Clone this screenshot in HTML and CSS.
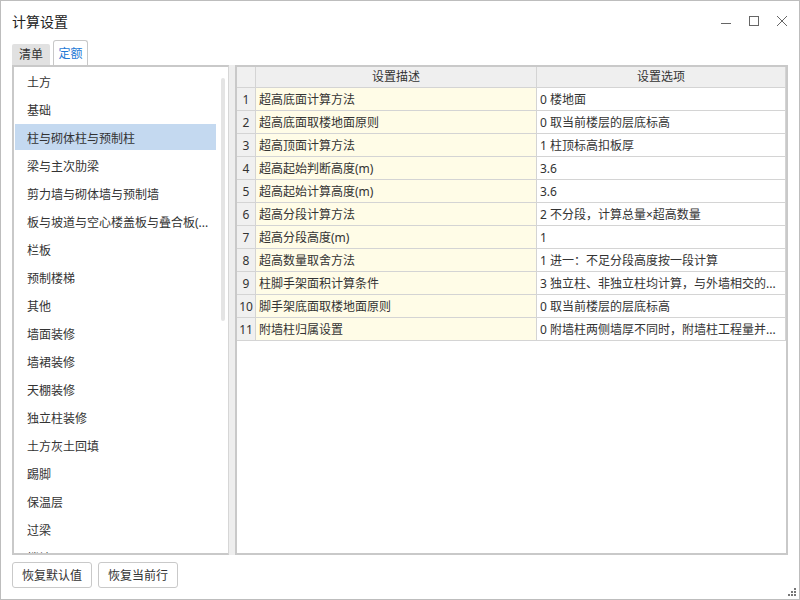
FILE: index.html
```html
<!DOCTYPE html>
<html lang="zh-CN">
<head>
<meta charset="utf-8">
<title>计算设置</title>
<link rel="stylesheet" href="styles.css">
</head>
<body>
<div class="window">
  <div class="titlebar">
    <span class="title">计算设置</span>
    <div class="controls">
      <svg class="ctl" width="10" height="10" viewBox="0 0 10 10"><line x1="0" y1="7.5" x2="10" y2="7.5" stroke="#666" stroke-width="1"/></svg>
      <svg class="ctl" width="10" height="10" viewBox="0 0 10 10"><rect x="0.5" y="0.5" width="9" height="9" fill="none" stroke="#666" stroke-width="1"/></svg>
      <svg class="ctl" width="10" height="10" viewBox="0 0 10 10"><path d="M0 0 L10 10 M10 0 L0 10" stroke="#666" stroke-width="1"/></svg>
    </div>
  </div>
  <div class="tabs">
    <div class="tab">清单</div>
    <div class="tab active">定额</div>
  </div>
  <div class="main">
    <div class="left">
      <div class="items">
        <div class="item">土方</div>
        <div class="item">基础</div>
        <div class="item selected">柱与砌体柱与预制柱</div>
        <div class="item">梁与主次肋梁</div>
        <div class="item">剪力墙与砌体墙与预制墙</div>
        <div class="item">板与坡道与空心楼盖板与叠合板(...</div>
        <div class="item">栏板</div>
        <div class="item">预制楼梯</div>
        <div class="item">其他</div>
        <div class="item">墙面装修</div>
        <div class="item">墙裙装修</div>
        <div class="item">天棚装修</div>
        <div class="item">独立柱装修</div>
        <div class="item">土方灰土回填</div>
        <div class="item">踢脚</div>
        <div class="item">保温层</div>
        <div class="item">过梁</div>
        <div class="item">楼地面</div>
      </div>
      <div class="track"><div class="thumb"></div></div>
    </div>
    <div class="splitter"></div>
    <div class="right">
      <div class="row head">
        <div class="cell num"></div>
        <div class="cell c">设置描述</div>
        <div class="cell c">设置选项</div>
      </div>
      <div class="row"><div class="cell num">1</div><div class="cell desc">超高底面计算方法</div><div class="cell opt">0 楼地面</div></div>
      <div class="row"><div class="cell num">2</div><div class="cell desc">超高底面取楼地面原则</div><div class="cell opt">0 取当前楼层的层底标高</div></div>
      <div class="row"><div class="cell num">3</div><div class="cell desc">超高顶面计算方法</div><div class="cell opt">1 柱顶标高扣板厚</div></div>
      <div class="row"><div class="cell num">4</div><div class="cell desc">超高起始判断高度(m)</div><div class="cell opt">3.6</div></div>
      <div class="row"><div class="cell num">5</div><div class="cell desc">超高起始计算高度(m)</div><div class="cell opt">3.6</div></div>
      <div class="row"><div class="cell num">6</div><div class="cell desc">超高分段计算方法</div><div class="cell opt">2 不分段，计算总量×超高数量</div></div>
      <div class="row"><div class="cell num">7</div><div class="cell desc">超高分段高度(m)</div><div class="cell opt">1</div></div>
      <div class="row"><div class="cell num">8</div><div class="cell desc">超高数量取舍方法</div><div class="cell opt">1 进一：不足分段高度按一段计算</div></div>
      <div class="row"><div class="cell num">9</div><div class="cell desc">柱脚手架面积计算条件</div><div class="cell opt">3 独立柱、非独立柱均计算，与外墙相交的...</div></div>
      <div class="row"><div class="cell num">10</div><div class="cell desc">脚手架底面取楼地面原则</div><div class="cell opt">0 取当前楼层的层底标高</div></div>
      <div class="row"><div class="cell num">11</div><div class="cell desc">附墙柱归属设置</div><div class="cell opt">0 附墙柱两侧墙厚不同时，附墙柱工程量并...</div></div>
    </div>
  </div>
  <div class="footer">
    <button class="btn">恢复默认值</button>
    <button class="btn">恢复当前行</button>
  </div>
  <svg class="grip" width="10" height="10" viewBox="0 0 10 10">
    <rect x="7" y="1" width="2" height="2" fill="#777"/>
    <rect x="4" y="4" width="2" height="2" fill="#777"/>
    <rect x="7" y="4" width="2" height="2" fill="#777"/>
    <rect x="1" y="7" width="2" height="2" fill="#777"/>
    <rect x="4" y="7" width="2" height="2" fill="#777"/>
    <rect x="7" y="7" width="2" height="2" fill="#777"/>
  </svg>
</div>
</body>
</html>
```
FILE: styles.css
```css
html, body {
  margin: 0;
  padding: 0;
  background: #fff;
}
body {
  font-family: "Noto Sans", "Noto Sans CJK SC", sans-serif;
  color: #333;
}
.window {
  position: relative;
  width: 800px;
  height: 600px;
  box-sizing: border-box;
  border: 1px solid #bdbdbd;
  display: flex;
  flex-direction: column;
  background: #fff;
}
.titlebar {
  height: 39px;
  display: flex;
  align-items: center;
  padding: 0 12px 0 11px;
  flex: none;
}
.title {
  font-size: 14px;
  color: #222;
}
.controls {
  margin-left: auto;
  display: flex;
  gap: 18px;
  align-items: center;
}
.ctl {
  display: block;
}
.tabs {
  height: 25px;
  flex: none;
  display: flex;
  align-items: flex-end;
  padding-left: 11px;
  gap: 3px;
}
.tab {
  font-size: 12px;
  width: 38px;
  height: 21px;
  line-height: 21px;
  text-align: center;
  background: #e1e1e1;
  color: #333;
  border-radius: 2px 2px 0 0;
}
.tab.active {
  width: 35px;
  height: 25px;
  line-height: 25px;
  box-sizing: border-box;
  border: 1px solid #c8c8c8;
  border-bottom: none;
  background: #fff;
  color: #1f7ad6;
  border-radius: 3px 3px 0 0;
}
.main {
  height: 490px;
  flex: none;
  margin: 0 11px;
  display: flex;
}
.left {
  width: 217px;
  box-sizing: border-box;
  border: 2px solid #c9c9c9;
  border-right: 1px solid #d6d6d6;
  display: flex;
  overflow: hidden;
}
.items {
  width: 202px;
  padding: 1px 0 0 1px;
  box-sizing: border-box;
  overflow: hidden;
  flex: none;
}
.item {
  height: 28px;
  box-sizing: border-box;
  padding: 1px 0 0 12px;
  line-height: 28px;
  font-size: 12px;
  color: #333;
  white-space: nowrap;
  overflow: hidden;
}
.item.selected {
  background: linear-gradient(#c4d9f0, #c4d9f0) no-repeat 0 0 / 100% 26px;
}
.track {
  flex: 1;
}
.thumb {
  margin: 11px 0 0 5px;
  width: 4px;
  height: 243px;
  border-radius: 2px;
  background: #e4e4e4;
}
.splitter {
  width: 6px;
  flex: none;
  background: #eeeeee;
}
.right {
  flex: 1;
  box-sizing: border-box;
  border: 2px solid #c9c9c9;
  overflow: hidden;
}
.row {
  display: grid;
  grid-template-columns: 19px 281px 1fr;
  height: 23px;
}
.row.head {
  height: 21px;
  background: #efefef;
}
.cell {
  box-sizing: border-box;
  border-right: 1px solid #d4d4d4;
  border-bottom: 1px solid #d4d4d4;
  font-size: 12px;
  line-height: 22px;
  padding: 1px 0 0 3px;
  white-space: nowrap;
  overflow: hidden;
  text-overflow: ellipsis;
  color: #333;
}
.head .cell {
  line-height: 20px;
  padding-top: 0;
}
.cell.c {
  text-align: center;
  padding-left: 0;
}
.cell.num {
  background: #f0f0f0;
  text-align: center;
  padding-left: 0;
}
.cell.desc {
  background: #fffce7;
}
.cell.opt {
  background: #fff;
}
.footer {
  display: flex;
  gap: 6px;
  padding: 7px 11px 0;
}
.btn {
  width: 80px;
  height: 26px;
  box-sizing: border-box;
  border: 1px solid #c9c9c9;
  border-radius: 3px;
  background: #fff;
  font-family: "Noto Sans", "Noto Sans CJK SC", sans-serif;
  font-size: 12px;
  color: #333;
  padding: 0;
}
.grip {
  position: absolute;
  right: 2px;
  bottom: 2px;
}
```
